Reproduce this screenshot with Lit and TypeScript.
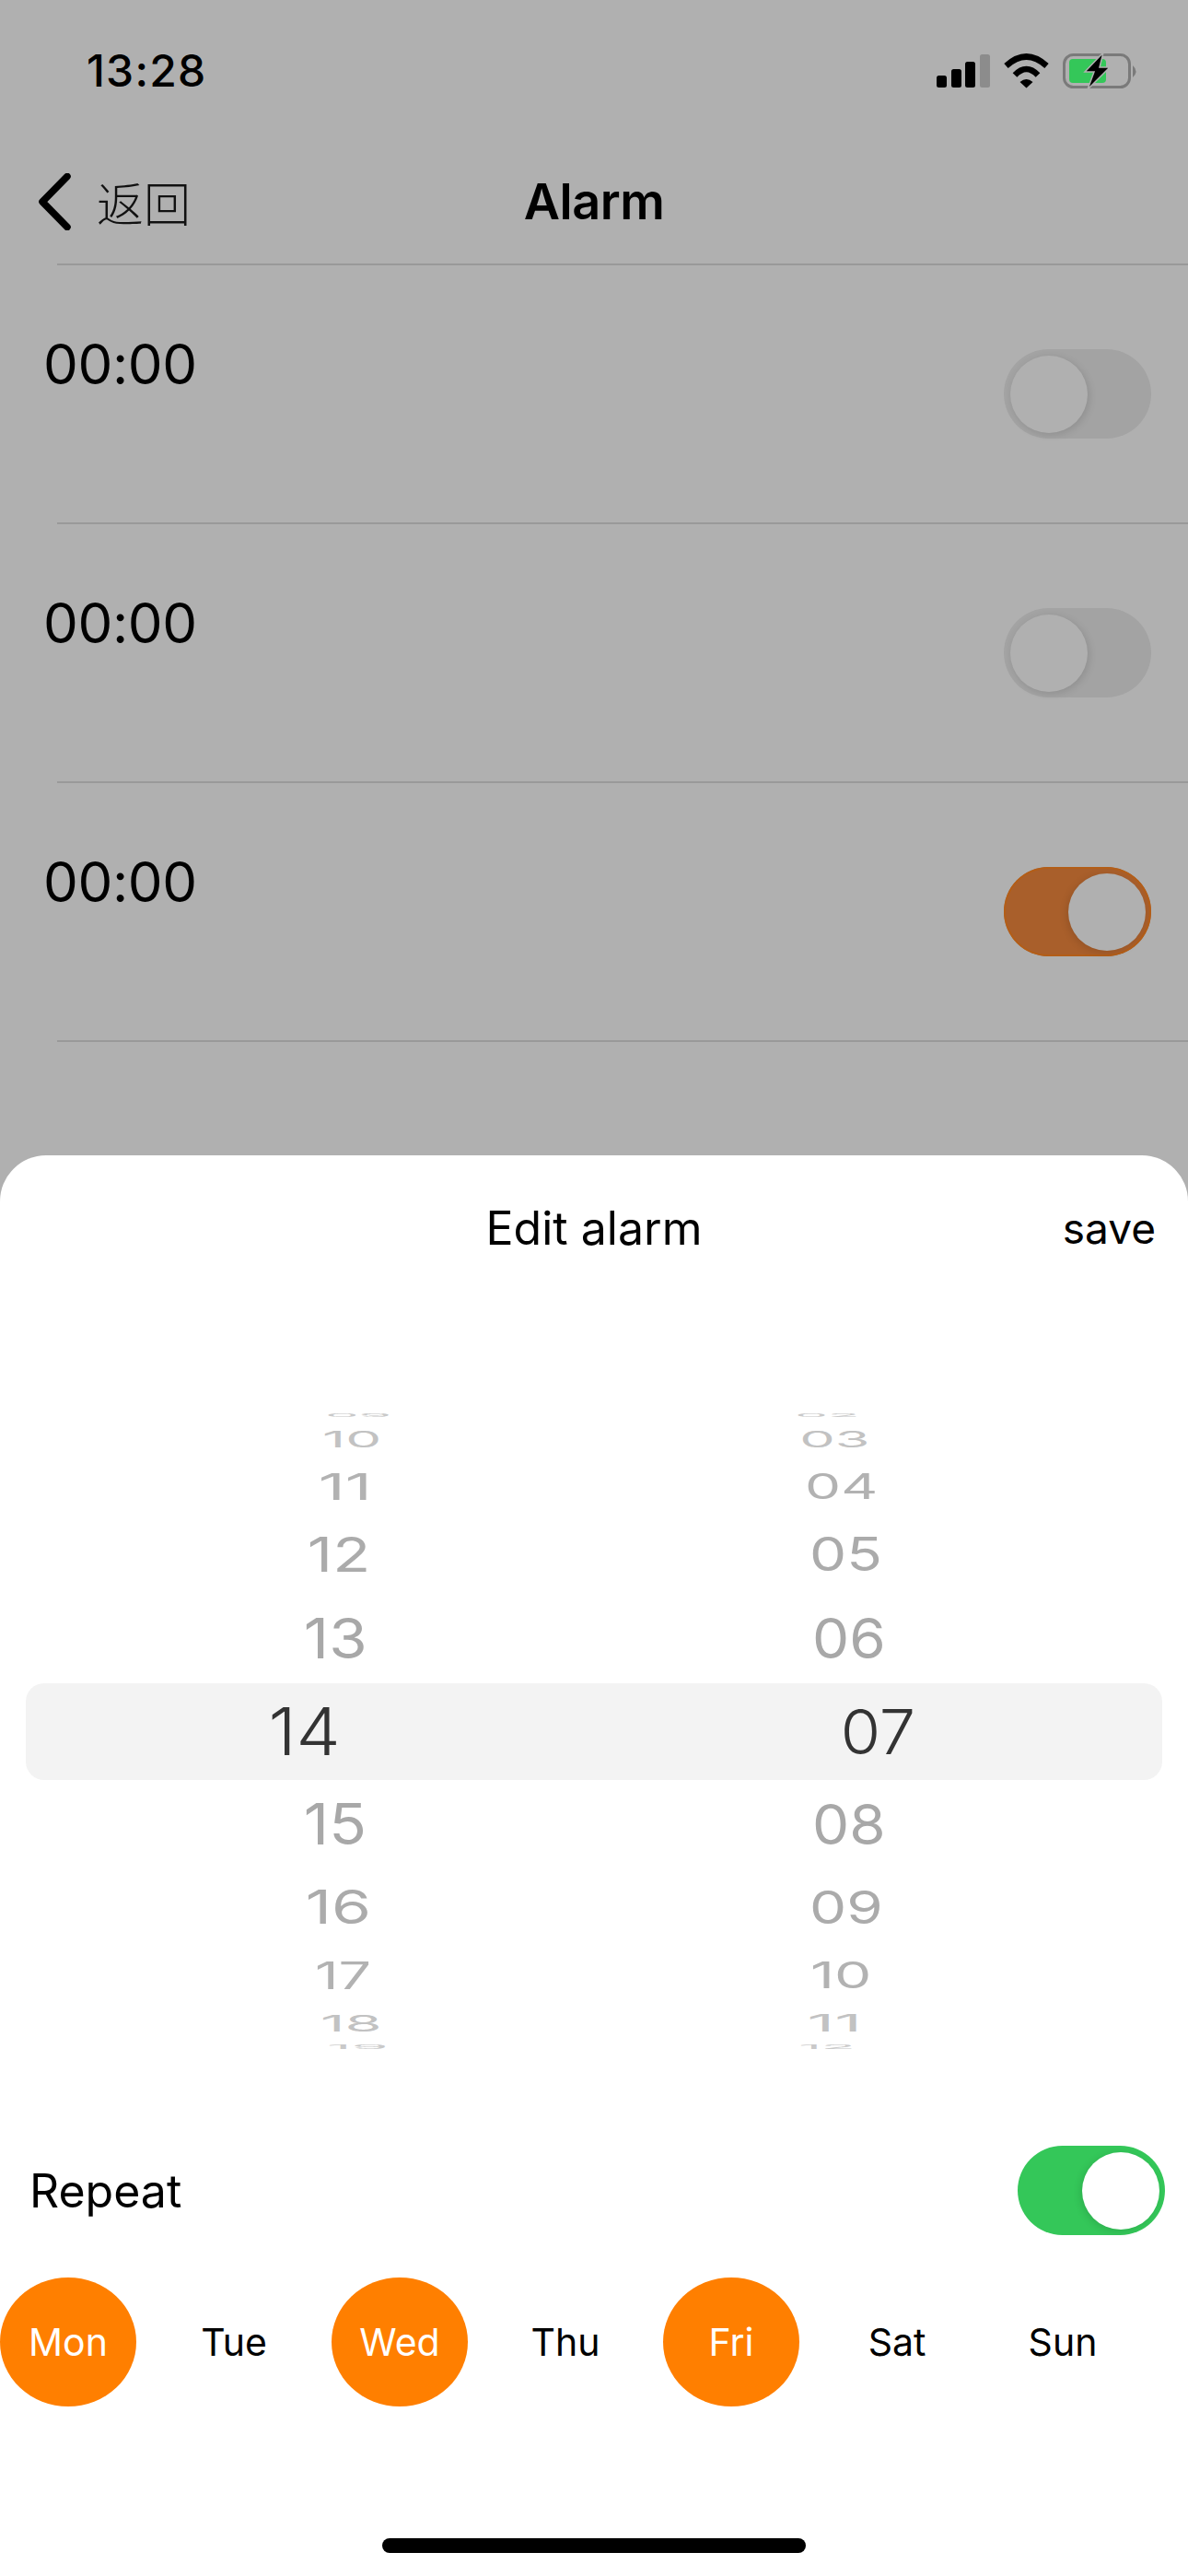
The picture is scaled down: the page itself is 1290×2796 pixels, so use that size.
import { LitElement, html, css, svg } from "lit";
import { customElement } from "lit/decorators.js";

type Wheel = { t: string; cy: number; h: number; x0: number; x1: number; c: string; sel?: boolean };

const HOURS: Wheel[] = [
  { t: "09", cy: 1536, h: 4, x0: 356, x1: 422, c: "#c9c9c9" },
  { t: "10", cy: 1562, h: 19, x0: 353, x1: 411, c: "#c2c2c2" },
  { t: "11", cy: 1613, h: 29, x0: 349, x1: 398, c: "#b2b2b2" },
  { t: "12", cy: 1687, h: 39, x0: 337, x1: 398, c: "#ababab" },
  { t: "13", cy: 1778, h: 46, x0: 333, x1: 395, c: "#a8a8a8" },
  { t: "14", cy: 1879, h: 52, x0: 295, x1: 368, c: "#333333", sel: true },
  { t: "15", cy: 1980, h: 46, x0: 333, x1: 395, c: "#a8a8a8" },
  { t: "16", cy: 2070, h: 39, x0: 335, x1: 399, c: "#ababab" },
  { t: "17", cy: 2144, h: 30, x0: 345, x1: 401, c: "#b2b2b2" },
  { t: "18", cy: 2196, h: 19, x0: 351, x1: 411, c: "#c2c2c2" },
  { t: "19", cy: 2221, h: 5, x0: 358, x1: 418, c: "#c9c9c9" },
];
const MINUTES: Wheel[] = [
  { t: "02", cy: 1536, h: 4, x0: 866, x1: 930, c: "#c9c9c9" },
  { t: "03", cy: 1562, h: 19, x0: 871, x1: 941, c: "#c2c2c2" },
  { t: "04", cy: 1613, h: 29, x0: 877, x1: 950, c: "#b2b2b2" },
  { t: "05", cy: 1687, h: 39, x0: 882, x1: 955, c: "#ababab" },
  { t: "06", cy: 1778, h: 46, x0: 885, x1: 958, c: "#a8a8a8" },
  { t: "07", cy: 1879, h: 52, x0: 916, x1: 993, c: "#333333", sel: true },
  { t: "08", cy: 1980, h: 46, x0: 885, x1: 958, c: "#a8a8a8" },
  { t: "09", cy: 2070, h: 39, x0: 882, x1: 955, c: "#ababab" },
  { t: "10", cy: 2144, h: 30, x0: 883, x1: 943, c: "#b2b2b2" },
  { t: "11", cy: 2196, h: 19, x0: 880, x1: 930, c: "#c2c2c2" },
  { t: "12", cy: 2221, h: 5, x0: 870, x1: 925, c: "#c9c9c9" },
];
const WHEEL_TOP = 1530;
const WHEEL_BOTTOM = 2226;
const FONT_PX = 64;
const DAYS = [
  { d: "Mon", on: true }, { d: "Tue", on: false }, { d: "Wed", on: true }, { d: "Thu", on: false },
  { d: "Fri", on: true }, { d: "Sat", on: false }, { d: "Sun", on: false },
];

const ctx = document.createElement("canvas").getContext("2d")!;
ctx.font = `400 ${FONT_PX}px Inter`;

@customElement("app-root")
export class AppRoot extends LitElement {
  static styles = css`
    :host { display: block; width: 1290px; height: 2796px; position: relative; overflow: hidden;
      background: #b0b0b0; font-family: Inter, "Noto Sans CJK SC", sans-serif; color: #000; }
    .status { height: 110px; padding: 44px 53px 0 94px; display: flex; align-items: center; justify-content: space-between; box-sizing: border-box; }
    .clock { font-size: 48px; font-weight: 500; line-height: 56px; letter-spacing: 1.2px; }
    .icons { display: flex; align-items: center; height: 40px; }
    .nav { height: 176px; position: relative; box-sizing: border-box; display: flex; align-items: center; padding: 41px 0 0 40px; }
    .navinner { display: flex; align-items: center; gap: 27px; }
    .back { font-size: 51px; font-family: "Noto Sans CJK SC", sans-serif; font-weight: 300; line-height: 60px; color: #111; }
    .title { position: absolute; left: 0; right: 0; top: 41px; bottom: 0; text-align: center; font-size: 54px; font-weight: 600; letter-spacing: -0.5px; display: flex; align-items: center; justify-content: center; }
    .list { display: flex; flex-direction: column; }
    .row { height: 281px; margin-left: 62px; border-top: 2px solid #999; box-sizing: border-box; display: flex; justify-content: space-between; }
    .row.last { height: 2px; }
    .tm { font-size: 60px; margin-left: -15px; margin-top: 71px; line-height: 72px; height: 72px; letter-spacing: -0.4px; }
    .tg { width: 160px; height: 97px; border-radius: 49px; position: relative; box-sizing: border-box; flex: none; }
    .row .tg { margin: 91px 40px 0 0; }
    .tg .knob { position: absolute; top: 6.5px; width: 84px; height: 84px; border-radius: 50%; }
    .tg.off { background: #a3a3a3; }
    .tg.off .knob { left: 7px; background: #b0b0b0; box-shadow: 2px 2px 8px rgba(0,0,0,.12); }
    .tg.dimon { background: #a95f2b; box-shadow: inset 0 0 0 2px #b35e18; }
    .tg.dimon .knob { right: 6px; background: #b0b0b0; box-shadow: -2px 2px 8px rgba(0,0,0,.12); }
    .tg.on { background: #34c759; }
    .tg.on .knob { right: 6px; background: #fff; box-shadow: -2px 2px 8px rgba(0,0,0,.12); }
    .sheet { position: absolute; left: 0; right: 0; top: 1254px; bottom: 0; background: #fff; border-radius: 50px 50px 0 0; display: flex; flex-direction: column; }
    .sheethead { height: 80px; margin-top: 39px; position: relative; display: flex; align-items: center; justify-content: center; flex: none; }
    .sheethead .t { font-size: 50px; }
    .sheethead .s { position: absolute; right: 35px; font-size: 46px; }
    .picker { position: relative; margin-top: 157px; height: 696px; overflow: hidden; flex: none; display: grid; grid-template-columns: 1fr; }
    .band { position: absolute; left: 28px; width: 1234px; top: 297px; height: 105px; background: #f3f3f3; border-radius: 20px; }
    .wheel { grid-area: 1 / 1; display: flex; flex-direction: column; position: relative; }
    .it { flex: none; white-space: nowrap; }
    .it span { display: block; width: max-content; font-size: 64px; font-weight: 400; line-height: 64px; }
    .it span.sel { font-weight: 300; }
    .repeat { margin-top: 103px; padding: 0 25px 0 32px; display: flex; justify-content: space-between; align-items: center; height: 97px; flex: none; }
    .repeat .l { font-size: 50px; }
    .days { margin: 46px 0 0 -16px; display: grid; grid-template-columns: repeat(7, 180px); flex: none; }
    .day { height: 140px; display: flex; align-items: center; justify-content: center; font-size: 41px; position: relative; }
    .day.on { color: #fff; }
    .day.on::before { content: ""; position: absolute; left: 16px; width: 148px; height: 140px; background: #ff7f00; border-radius: 50%; }
    .day b { font-weight: 400; position: relative; }
    .home { margin: 143px auto 0; width: 460px; height: 16px; border-radius: 8px; background: #000; flex: none; }
  `;

  renderWheel(items: Wheel[]) {
    const tops = items.map((w, i) => (i === 0 ? WHEEL_TOP : (items[i - 1].cy + w.cy) / 2));
    return html`<div class="wheel">
      ${items.map((w, i) => {
        const top = tops[i];
        const bottom = i + 1 < items.length ? tops[i + 1] : WHEEL_BOTTOM;
        const m = ctx.measureText(w.t);
        const inkW = m.actualBoundingBoxLeft + m.actualBoundingBoxRight;
        const inkH = m.actualBoundingBoxAscent + m.actualBoundingBoxDescent;
        const fa = m.fontBoundingBoxAscent;
        const fd = m.fontBoundingBoxDescent;
        const baseline = (FONT_PX + fa - fd) / 2;
        const inkCenter = baseline - (m.actualBoundingBoxAscent - m.actualBoundingBoxDescent) / 2;
        const sx = (w.x1 - w.x0) / inkW;
        const sy = w.h / inkH;
        const x = w.x0 + m.actualBoundingBoxLeft * sx;
        const y = w.cy - top - inkCenter;
        return html`<div class="it" style="height:${bottom - top}px">
          <span class=${w.sel ? "sel" : ""} style="color:${w.c};transform-origin:0 ${inkCenter.toFixed(2)}px;transform:translate(${x.toFixed(2)}px,${y.toFixed(2)}px) scale(${sx.toFixed(3)},${sy.toFixed(3)})">${w.t}</span>
        </div>`;
      })}
    </div>`;
  }

  toggle(kind: string) {
    return html`<div class="tg ${kind}"><div class="knob"></div></div>`;
  }

  render() {
    return html`
      <div class="status">
        <div class="clock">13:28</div>
        <div class="icons">
          <svg width="220" height="40" viewBox="0 0 220 40">
            ${svg`
            <rect x="0" y="25" width="11" height="13" rx="2.5" fill="#000"/>
            <rect x="16" y="18" width="11" height="20" rx="2.5" fill="#000"/>
            <rect x="31" y="10" width="11" height="28" rx="2.5" fill="#000"/>
            <rect x="47" y="2" width="11" height="36" rx="2.5" fill="#8c8c8c"/>
            <path d="M75.5 14.5 Q97.5 -5.5 119.5 14.5" fill="none" stroke="#000" stroke-width="6.5"/>
            <path d="M85 24.5 Q97.5 11.5 110 24.5" fill="none" stroke="#000" stroke-width="6.5"/>
            <path d="M90.5 32 Q97.5 26 104.5 32 L97.5 38.5 Z" fill="#000"/>
            <rect x="138.5" y="2.5" width="71" height="35" rx="10" fill="none" stroke="#7a7a7a" stroke-width="3"/>
            <rect x="144" y="7" width="40" height="26" rx="4" fill="#34c759"/>
            <path d="M213 14 Q220 20.5 213 27 Z" fill="#7a7a7a"/>
            <path d="M181 0 L161 21 L171 21 L164 40 L188 16 L177 16 Z" fill="#000" stroke="#b0b0b0" stroke-width="1.5"/>
            `}
          </svg>
        </div>
      </div>
      <div class="nav">
        <div class="navinner">
          <svg width="38" height="62" viewBox="0 0 38 62">
            ${svg`<path d="M33 3.5 L6 31 L33 58.5" fill="none" stroke="#000" stroke-width="7.5" stroke-linecap="round" stroke-linejoin="round"/>`}
          </svg>
          <span class="back">返回</span>
        </div>
        <div class="title">Alarm</div>
      </div>
      <div class="list">
        <div class="row"><span class="tm">00:00</span>${this.toggle("off")}</div>
        <div class="row"><span class="tm">00:00</span>${this.toggle("off")}</div>
        <div class="row"><span class="tm">00:00</span>${this.toggle("dimon")}</div>
        <div class="row last"></div>
      </div>
      <div class="sheet">
        <div class="sheethead">
          <span class="t">Edit alarm</span>
          <span class="s">save</span>
        </div>
        <div class="picker">
          <div class="band"></div>
          ${this.renderWheel(HOURS)}
          ${this.renderWheel(MINUTES)}
        </div>
        <div class="repeat"><span class="l">Repeat</span>${this.toggle("on")}</div>
        <div class="days">
          ${DAYS.map((d) => html`<div class="day ${d.on ? "on" : ""}"><b>${d.d}</b></div>`)}
        </div>
        <div class="home"></div>
      </div>
    `;
  }
}
